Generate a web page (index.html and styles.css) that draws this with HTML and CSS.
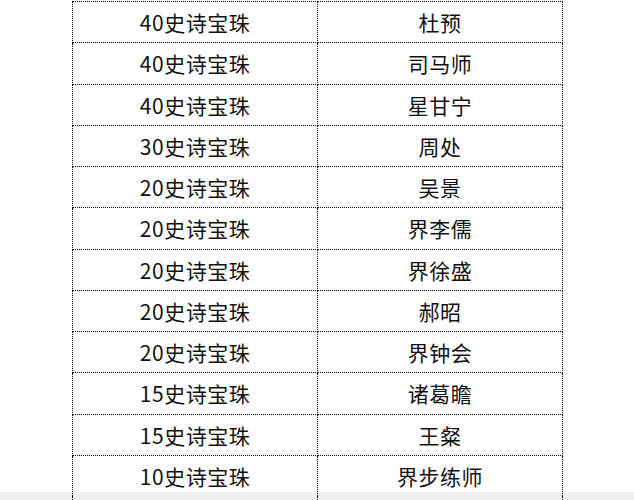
FILE: index.html
```html
<!DOCTYPE html>
<html lang="zh">
<head>
<meta charset="utf-8">
<link rel="stylesheet" href="styles.css">
</head>
<body>
<table class="list">
  <tbody>
    <tr><td>40史诗宝珠</td><td>杜预</td></tr>
    <tr><td>40史诗宝珠</td><td>司马师</td></tr>
    <tr><td>40史诗宝珠</td><td>星甘宁</td></tr>
    <tr><td>30史诗宝珠</td><td>周处</td></tr>
    <tr><td>20史诗宝珠</td><td>吴景</td></tr>
    <tr><td>20史诗宝珠</td><td>界李儒</td></tr>
    <tr><td>20史诗宝珠</td><td>界徐盛</td></tr>
    <tr><td>20史诗宝珠</td><td>郝昭</td></tr>
    <tr><td>20史诗宝珠</td><td>界钟会</td></tr>
    <tr><td>15史诗宝珠</td><td>诸葛瞻</td></tr>
    <tr><td>15史诗宝珠</td><td>王粲</td></tr>
    <tr class="last"><td>10史诗宝珠</td><td>界步练师</td></tr>
    <tr class="filler"><td></td><td></td></tr>
  </tbody>
</table>
</body>
</html>
```
FILE: styles.css
```css
html {
  background: linear-gradient(#ffffff 492px, #efefef 492px);
  min-height: 100%;
}
body {
  margin: 0;
  height: 500px;
  overflow: hidden;
  font-family: "Noto Sans CJK SC", "Noto Sans", sans-serif;
  color: #111;
}
.list {
  border-collapse: collapse;
  margin: 1px 0 0 72px;
  table-layout: fixed;
  width: 489px;
}
.list td {
  border: 1px dotted #000;
  width: 244px;
  height: 40.25px;
  padding: 0;
  text-align: center;
  vertical-align: middle;
  font-size: 21px;
  line-height: 28px;
  letter-spacing: 0.5px;
}
.list tr.last td {
  border-bottom: none;
}
.list tr.filler td {
  border-top: none;
  border-bottom: none;
  height: 20px;
}
```
